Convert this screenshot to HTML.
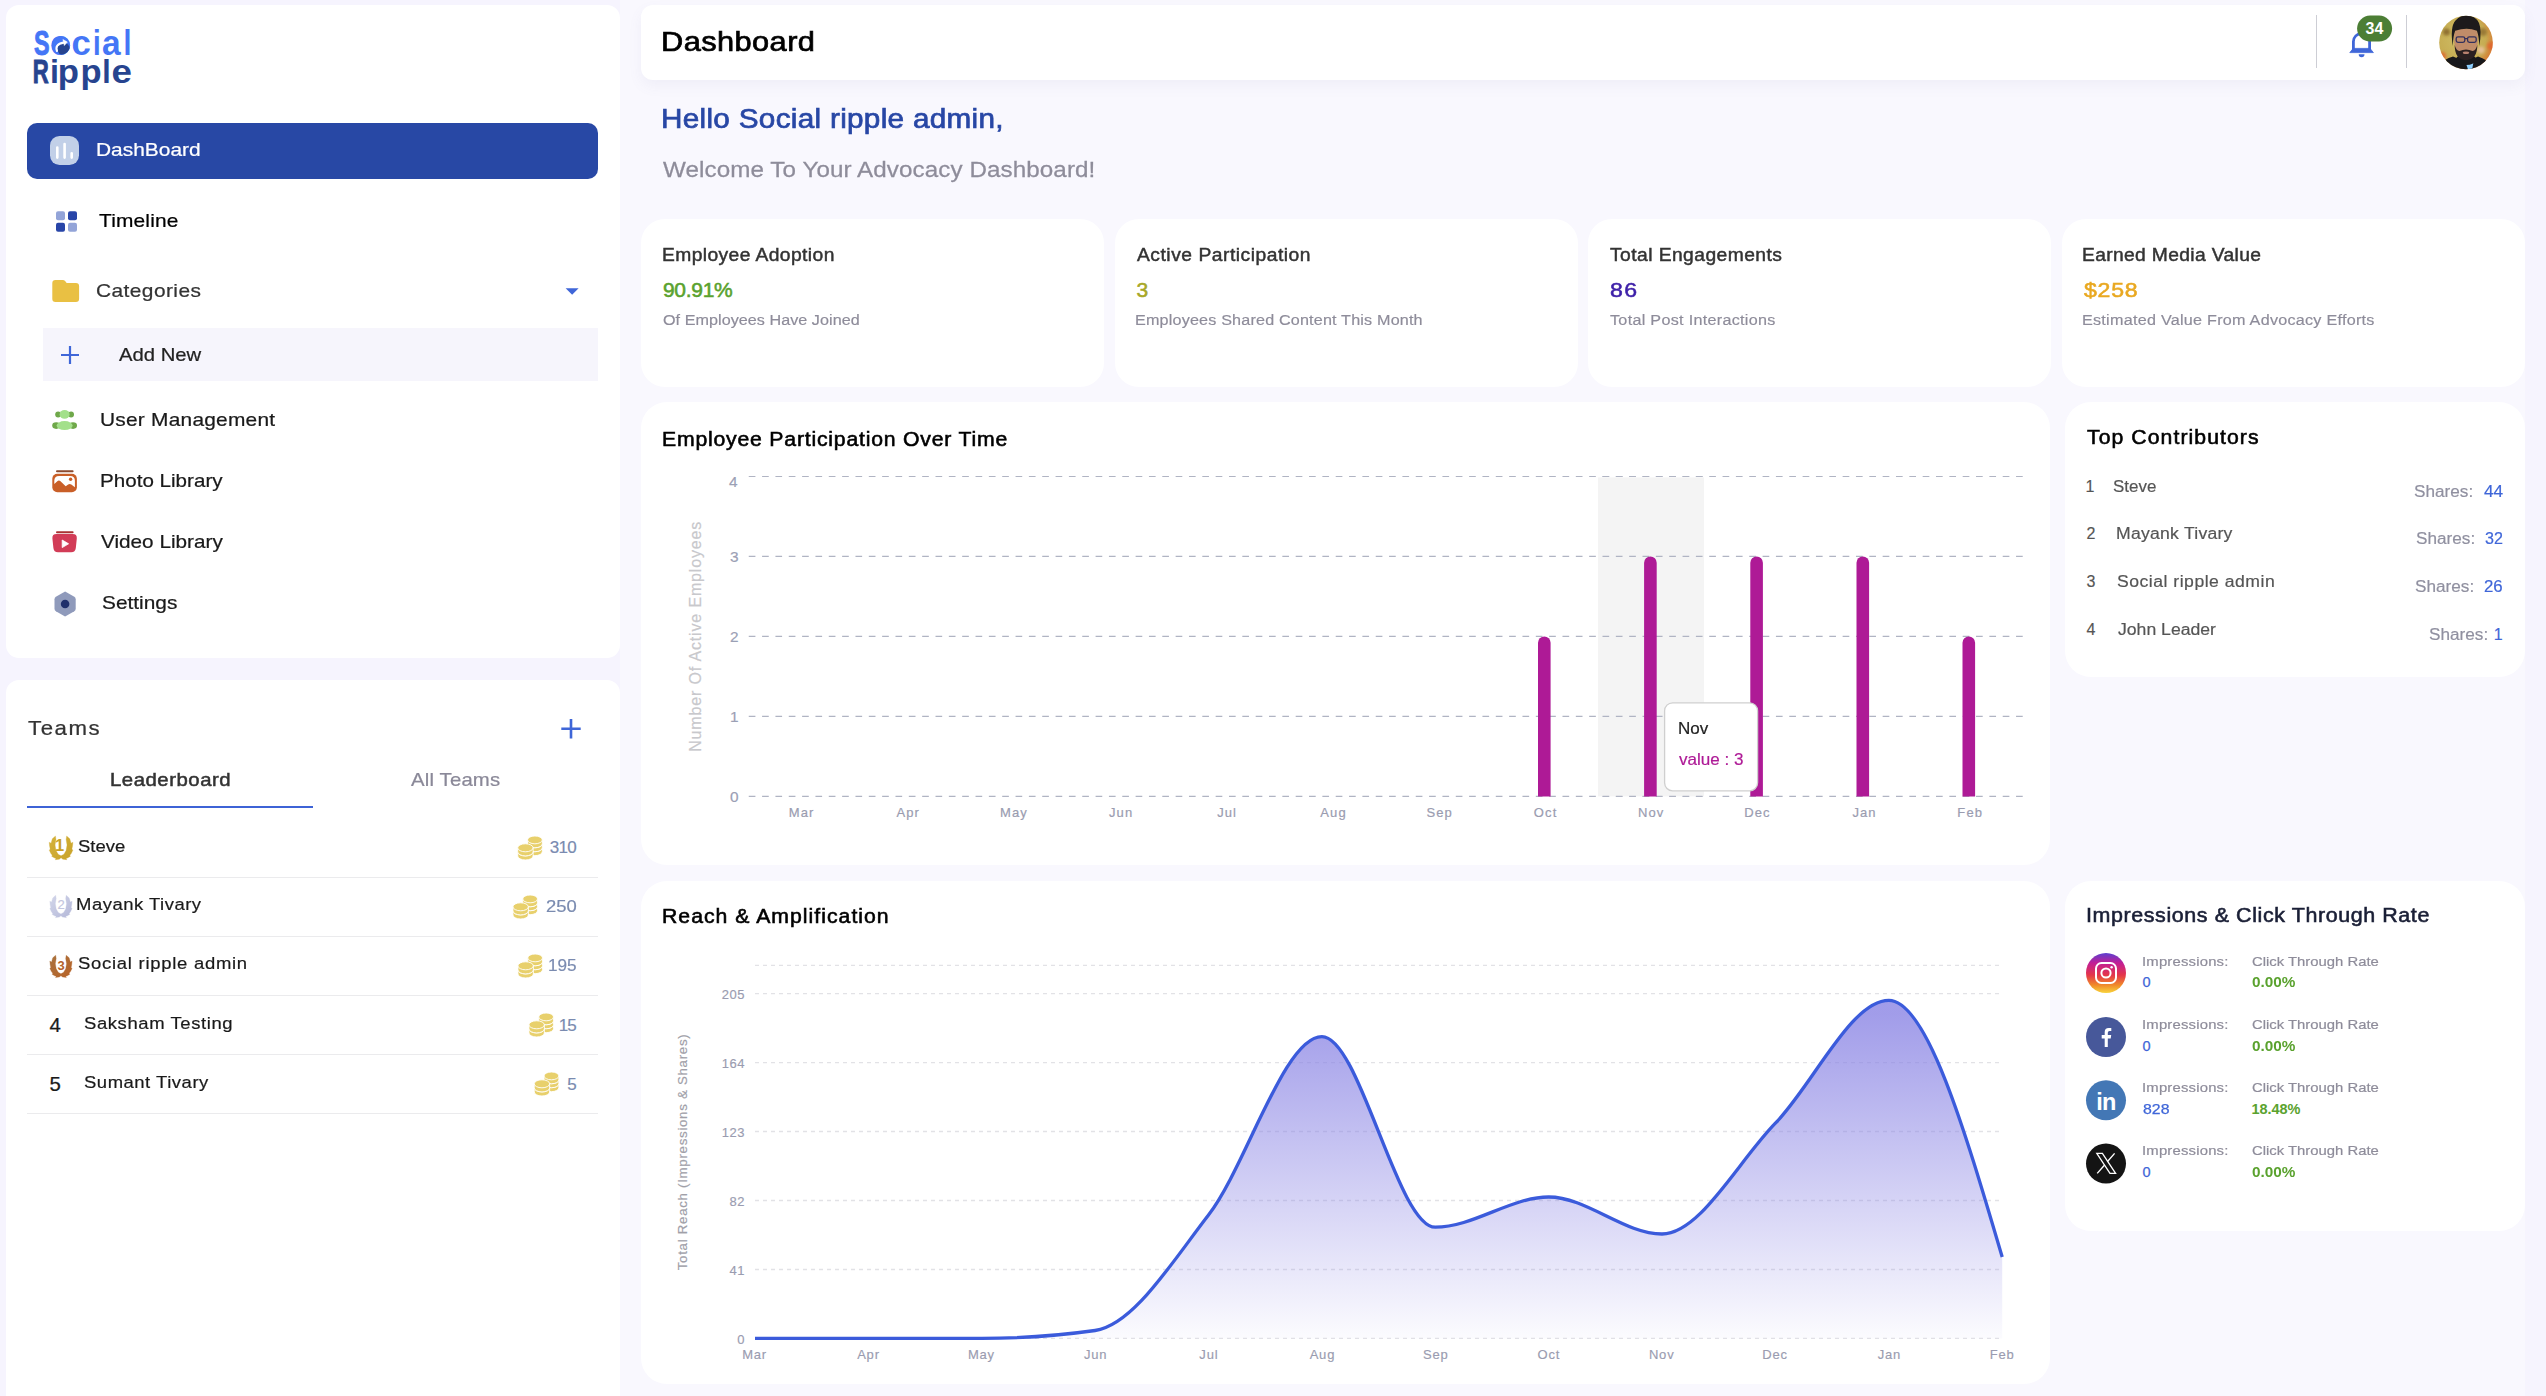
<!DOCTYPE html>
<html lang="en"><head><meta charset="utf-8"><title>Dashboard</title>
<style>
html,body{margin:0;padding:0;}
body{width:2546px;height:1396px;overflow:hidden;background:#f6f4fe;font-family:"Liberation Sans", sans-serif;position:relative;}
.t{position:absolute;white-space:pre;line-height:1;}
.b{position:absolute;}
.card{position:absolute;background:#fff;}
</style></head>
<body>

<div class="b" style="left:620px;top:0;width:1905px;height:1396px;background:#f9f8fe;"></div>
<div class="card" style="left:6px;top:5px;width:614px;height:653px;border-radius:13px;"></div>
<div class="card" style="left:6px;top:680px;width:614px;height:716px;border-radius:13px 13px 0 0;"></div>
<div class="b" style="left:27px;top:123px;width:571px;height:56px;border-radius:10px;background:#2848a5;"></div>
<div class="b" style="left:43px;top:328px;width:555px;height:53px;background:#f6f5fc;"></div>
<div class="b" style="left:27px;top:806px;width:286px;height:2px;background:#3d63d6;"></div>
<div class="card" style="left:641px;top:5px;width:1884px;height:74.5px;border-radius:12px;box-shadow:0 6px 14px rgba(120,120,170,0.07);"></div>
<div class="b" style="left:2316px;top:15px;width:1.3px;height:53px;background:#cdced5;"></div>
<div class="b" style="left:2406px;top:15px;width:1.3px;height:53px;background:#cdced5;"></div>
<div class="b" style="left:27px;top:877px;width:571px;height:1px;background:#ebebed;"></div>
<div class="b" style="left:27px;top:936px;width:571px;height:1px;background:#ebebed;"></div>
<div class="b" style="left:27px;top:995px;width:571px;height:1px;background:#ebebed;"></div>
<div class="b" style="left:27px;top:1054px;width:571px;height:1px;background:#ebebed;"></div>
<div class="b" style="left:27px;top:1113px;width:571px;height:1px;background:#ebebed;"></div>
<div class="card" style="left:641px;top:219px;width:463px;height:167.5px;border-radius:24px;"></div>
<div class="card" style="left:1115px;top:219px;width:463px;height:167.5px;border-radius:24px;"></div>
<div class="card" style="left:1588px;top:219px;width:463px;height:167.5px;border-radius:24px;"></div>
<div class="card" style="left:2062px;top:219px;width:463px;height:167.5px;border-radius:24px;"></div>

<div class="card" style="left:641px;top:402px;width:1409px;height:463px;border-radius:26px;"></div>
<div class="card" style="left:2065px;top:402px;width:460px;height:274.5px;border-radius:26px;"></div>
<div class="card" style="left:641px;top:880.5px;width:1409px;height:503px;border-radius:26px;"></div>
<div class="card" style="left:2065px;top:880.5px;width:460px;height:350.5px;border-radius:26px;"></div>

<svg class="b" style="left:0;top:0" width="2546" height="1396" viewBox="0 0 2546 1396">
<rect x="50" y="136" width="29" height="29" rx="9.5" fill="#c2d0e8"/>
<g stroke="#fff" stroke-width="2.6" stroke-linecap="round"><path d="M57.3 147.5V157.6M64.6 144V157.6M71.7 153.2V157.6"/></g>
<g><rect x="56" y="211.3" width="9" height="9" rx="2" fill="#93a4d8"/><rect x="68" y="211.3" width="9" height="9" rx="2" fill="#2845a8"/><rect x="56" y="222.8" width="9" height="9" rx="2" fill="#2845a8"/><rect x="68" y="222.8" width="9" height="9" rx="2" fill="#93a4d8"/></g>
<path d="M52.3 283.2 q0-3.2 3.2-3.2 h7.2 q1.6 0 2.6 1.2 l1.4 1.7 h9.2 q3.2 0 3.2 3.2 v12.6 q0 3.2-3.2 3.2 h-20.4 q-3.2 0-3.2-3.2 z" fill="#e9c043"/>
<path d="M565.6 288.2 h13 l-6.5 6.6 z" fill="#3f66d8"/>
<path d="M61 355 h18 M70 346 v18" stroke="#3f66d8" stroke-width="2.2" fill="none"/>
<path d="M561.3 728.8 h19.4 M571 719 v19.6" stroke="#3f66d8" stroke-width="2.6" fill="none"/>
<g><circle cx="58.1" cy="414.5" r="2.9" fill="#6fa84a"/><circle cx="71.1" cy="414.5" r="2.9" fill="#6fa84a"/><ellipse cx="64.6" cy="414.4" rx="5" ry="4.4" fill="#a3e08a"/><ellipse cx="56.2" cy="425.6" rx="4" ry="3.3" fill="#6fa84a"/><ellipse cx="73" cy="425.6" rx="4" ry="3.3" fill="#6fa84a"/><ellipse cx="64.6" cy="425.6" rx="8" ry="4.5" fill="#a3e08a"/></g>
<g><path d="M57 471.3 h15.6" stroke="#8b4a2f" stroke-width="2" stroke-linecap="round"/><rect x="52.3" y="473.8" width="24.6" height="18.5" rx="5" fill="#c95f28"/><path d="M54.3 480.8 q0-4.8 4.8-4.8 h11 q4.8 0 4.8 4.8 v6.4 l-3.6-2.6 q-1.6-1-3.2 0 l-2.4 1.6 l-5.2-5 q-1.6-1.4-3.2 0 l-3 2.8 z" fill="#fff"/><circle cx="70.6" cy="479.3" r="1.7" fill="#c95f28"/></g>
<g><path d="M57 532.2 h15.6" stroke="#a83232" stroke-width="2" stroke-linecap="round"/><path d="M56.6 534 h16 q4.6 0 4.2 4.4 l-1 9.6 q-0.4 4.2-4.6 4.2 h-13.2 q-4.2 0-4.6-4.2 l-1-9.6 q-0.4-4.4 4.2-4.4 z" fill="#d23c57"/><path d="M62.2 540 l6.4 3.8 l-6.4 3.8 z" fill="#fff" stroke="#fff" stroke-width="0.8" stroke-linejoin="round"/></g>
<g><path d="M65.1 591.6 l9.2 5.2 q1.4 0.8 1.4 2.4 v9.6 q0 1.6-1.4 2.4 l-9.2 5.2 l-9.2-5.2 q-1.4-0.8-1.4-2.4 v-9.6 q0-1.6 1.4-2.4 z" fill="#8f9abb"/><circle cx="65.1" cy="604" r="4.3" fill="#1f2f6b"/></g>
<defs><linearGradient id="lg1" x1="0" y1="0" x2="1" y2="1"><stop offset="0" stop-color="#d4b23c"/><stop offset="1" stop-color="#c9a227"/></linearGradient></defs><path d="M55.44 835.99 L52.32 838.75 L51.03 843.16 L49.19 842.24 L49.56 846.10 L50.19 849.04 L49.27 850.15 L50.85 853.46 L52.32 855.29 L51.58 856.21 L54.16 857.87 L55.99 858.42 L55.26 859.71 L59.30 859.16 L61.05 857.87 L62.80 859.16 L66.84 859.71 L66.11 858.42 L67.94 857.87 L70.52 856.21 L69.78 855.29 L71.25 853.46 L72.83 850.15 L71.91 849.04 L72.54 846.10 L72.91 842.24 L71.07 843.16 L69.78 838.75 L66.66 835.99 L66.11 839.49 L67.02 845.00 L66.11 850.52 L63.90 854.19 L61.05 855.85 L58.20 854.19 L55.99 850.52 L55.08 845.00 L55.99 839.49 Z" fill="url(#lg1)" stroke="url(#lg1)" stroke-width="0.3" stroke-linejoin="round"/>
<defs><linearGradient id="lg2" x1="0" y1="0" x2="1" y2="1"><stop offset="0" stop-color="#d3d6ea"/><stop offset="1" stop-color="#b4b8d8"/></linearGradient></defs><path d="M55.69 895.32 L52.76 897.91 L51.55 902.05 L49.82 901.19 L50.17 904.81 L50.75 907.57 L49.89 908.61 L51.38 911.71 L52.76 913.44 L52.07 914.30 L54.48 915.85 L56.21 916.37 L55.52 917.58 L59.31 917.06 L60.95 915.85 L62.59 917.06 L66.38 917.58 L65.69 916.37 L67.42 915.85 L69.83 914.30 L69.14 913.44 L70.52 911.71 L72.01 908.61 L71.15 907.57 L71.73 904.81 L72.08 901.19 L70.35 902.05 L69.14 897.91 L66.21 895.32 L65.69 898.60 L66.56 903.78 L65.69 908.95 L63.62 912.40 L60.95 913.95 L58.28 912.40 L56.21 908.95 L55.34 903.78 L56.21 898.60 Z" fill="url(#lg2)" stroke="url(#lg2)" stroke-width="0.3" stroke-linejoin="round"/>
<defs><linearGradient id="lg3" x1="0" y1="0" x2="1" y2="1"><stop offset="0" stop-color="#a9733f"/><stop offset="1" stop-color="#b86226"/></linearGradient></defs><path d="M55.69 955.22 L52.76 957.81 L51.55 961.95 L49.82 961.09 L50.17 964.71 L50.75 967.47 L49.89 968.51 L51.38 971.61 L52.76 973.34 L52.07 974.20 L54.48 975.75 L56.21 976.27 L55.52 977.48 L59.31 976.96 L60.95 975.75 L62.59 976.96 L66.38 977.48 L65.69 976.27 L67.42 975.75 L69.83 974.20 L69.14 973.34 L70.52 971.61 L72.01 968.51 L71.15 967.47 L71.73 964.71 L72.08 961.09 L70.35 961.95 L69.14 957.81 L66.21 955.22 L65.69 958.50 L66.56 963.68 L65.69 968.85 L63.62 972.30 L60.95 973.85 L58.28 972.30 L56.21 968.85 L55.34 963.68 L56.21 958.50 Z" fill="url(#lg3)" stroke="url(#lg3)" stroke-width="0.3" stroke-linejoin="round"/>
<g transform="translate(517.75 836)"><path d="M9.749999999999998 11.8 v3.95 a7.4 3.9 0 0 0 14.8 0 v-3.95 z" fill="#e8d06c" stroke="#fff" stroke-width="0.9"/><ellipse cx="17.15" cy="11.8" rx="7.4" ry="3.9" fill="#e8d06c" stroke="#fff" stroke-width="0.9"/><path d="M9.749999999999998 7.85 v3.95 a7.4 3.9 0 0 0 14.8 0 v-3.95 z" fill="#e8d06c" stroke="#fff" stroke-width="0.9"/><ellipse cx="17.15" cy="7.85" rx="7.4" ry="3.9" fill="#e8d06c" stroke="#fff" stroke-width="0.9"/><path d="M9.749999999999998 3.9 v3.95 a7.4 3.9 0 0 0 14.8 0 v-3.95 z" fill="#e8d06c" stroke="#fff" stroke-width="0.9"/><ellipse cx="17.15" cy="3.9" rx="7.4" ry="3.9" fill="#e8d06c" stroke="#fff" stroke-width="0.9"/><path d="M-0.04999999999999982 15.9 v4.1 a7.7 4.0 0 0 0 15.4 0 v-4.1 z" fill="#e8d06c" stroke="#fff" stroke-width="0.9"/><ellipse cx="7.65" cy="15.9" rx="7.7" ry="4.0" fill="#e8d06c" stroke="#fff" stroke-width="0.9"/><path d="M-0.04999999999999982 11.8 v4.1 a7.7 4.0 0 0 0 15.4 0 v-4.1 z" fill="#e8d06c" stroke="#fff" stroke-width="0.9"/><ellipse cx="7.65" cy="11.8" rx="7.7" ry="4.0" fill="#e8d06c" stroke="#fff" stroke-width="0.9"/></g>
<g transform="translate(513 895)"><path d="M9.749999999999998 11.8 v3.95 a7.4 3.9 0 0 0 14.8 0 v-3.95 z" fill="#e8d06c" stroke="#fff" stroke-width="0.9"/><ellipse cx="17.15" cy="11.8" rx="7.4" ry="3.9" fill="#e8d06c" stroke="#fff" stroke-width="0.9"/><path d="M9.749999999999998 7.85 v3.95 a7.4 3.9 0 0 0 14.8 0 v-3.95 z" fill="#e8d06c" stroke="#fff" stroke-width="0.9"/><ellipse cx="17.15" cy="7.85" rx="7.4" ry="3.9" fill="#e8d06c" stroke="#fff" stroke-width="0.9"/><path d="M9.749999999999998 3.9 v3.95 a7.4 3.9 0 0 0 14.8 0 v-3.95 z" fill="#e8d06c" stroke="#fff" stroke-width="0.9"/><ellipse cx="17.15" cy="3.9" rx="7.4" ry="3.9" fill="#e8d06c" stroke="#fff" stroke-width="0.9"/><path d="M-0.04999999999999982 15.9 v4.1 a7.7 4.0 0 0 0 15.4 0 v-4.1 z" fill="#e8d06c" stroke="#fff" stroke-width="0.9"/><ellipse cx="7.65" cy="15.9" rx="7.7" ry="4.0" fill="#e8d06c" stroke="#fff" stroke-width="0.9"/><path d="M-0.04999999999999982 11.8 v4.1 a7.7 4.0 0 0 0 15.4 0 v-4.1 z" fill="#e8d06c" stroke="#fff" stroke-width="0.9"/><ellipse cx="7.65" cy="11.8" rx="7.7" ry="4.0" fill="#e8d06c" stroke="#fff" stroke-width="0.9"/></g>
<g transform="translate(518 954)"><path d="M9.749999999999998 11.8 v3.95 a7.4 3.9 0 0 0 14.8 0 v-3.95 z" fill="#e8d06c" stroke="#fff" stroke-width="0.9"/><ellipse cx="17.15" cy="11.8" rx="7.4" ry="3.9" fill="#e8d06c" stroke="#fff" stroke-width="0.9"/><path d="M9.749999999999998 7.85 v3.95 a7.4 3.9 0 0 0 14.8 0 v-3.95 z" fill="#e8d06c" stroke="#fff" stroke-width="0.9"/><ellipse cx="17.15" cy="7.85" rx="7.4" ry="3.9" fill="#e8d06c" stroke="#fff" stroke-width="0.9"/><path d="M9.749999999999998 3.9 v3.95 a7.4 3.9 0 0 0 14.8 0 v-3.95 z" fill="#e8d06c" stroke="#fff" stroke-width="0.9"/><ellipse cx="17.15" cy="3.9" rx="7.4" ry="3.9" fill="#e8d06c" stroke="#fff" stroke-width="0.9"/><path d="M-0.04999999999999982 15.9 v4.1 a7.7 4.0 0 0 0 15.4 0 v-4.1 z" fill="#e8d06c" stroke="#fff" stroke-width="0.9"/><ellipse cx="7.65" cy="15.9" rx="7.7" ry="4.0" fill="#e8d06c" stroke="#fff" stroke-width="0.9"/><path d="M-0.04999999999999982 11.8 v4.1 a7.7 4.0 0 0 0 15.4 0 v-4.1 z" fill="#e8d06c" stroke="#fff" stroke-width="0.9"/><ellipse cx="7.65" cy="11.8" rx="7.7" ry="4.0" fill="#e8d06c" stroke="#fff" stroke-width="0.9"/></g>
<g transform="translate(529 1013)"><path d="M9.749999999999998 11.8 v3.95 a7.4 3.9 0 0 0 14.8 0 v-3.95 z" fill="#e8d06c" stroke="#fff" stroke-width="0.9"/><ellipse cx="17.15" cy="11.8" rx="7.4" ry="3.9" fill="#e8d06c" stroke="#fff" stroke-width="0.9"/><path d="M9.749999999999998 7.85 v3.95 a7.4 3.9 0 0 0 14.8 0 v-3.95 z" fill="#e8d06c" stroke="#fff" stroke-width="0.9"/><ellipse cx="17.15" cy="7.85" rx="7.4" ry="3.9" fill="#e8d06c" stroke="#fff" stroke-width="0.9"/><path d="M9.749999999999998 3.9 v3.95 a7.4 3.9 0 0 0 14.8 0 v-3.95 z" fill="#e8d06c" stroke="#fff" stroke-width="0.9"/><ellipse cx="17.15" cy="3.9" rx="7.4" ry="3.9" fill="#e8d06c" stroke="#fff" stroke-width="0.9"/><path d="M-0.04999999999999982 15.9 v4.1 a7.7 4.0 0 0 0 15.4 0 v-4.1 z" fill="#e8d06c" stroke="#fff" stroke-width="0.9"/><ellipse cx="7.65" cy="15.9" rx="7.7" ry="4.0" fill="#e8d06c" stroke="#fff" stroke-width="0.9"/><path d="M-0.04999999999999982 11.8 v4.1 a7.7 4.0 0 0 0 15.4 0 v-4.1 z" fill="#e8d06c" stroke="#fff" stroke-width="0.9"/><ellipse cx="7.65" cy="11.8" rx="7.7" ry="4.0" fill="#e8d06c" stroke="#fff" stroke-width="0.9"/></g>
<g transform="translate(534.3 1072)"><path d="M9.749999999999998 11.8 v3.95 a7.4 3.9 0 0 0 14.8 0 v-3.95 z" fill="#e8d06c" stroke="#fff" stroke-width="0.9"/><ellipse cx="17.15" cy="11.8" rx="7.4" ry="3.9" fill="#e8d06c" stroke="#fff" stroke-width="0.9"/><path d="M9.749999999999998 7.85 v3.95 a7.4 3.9 0 0 0 14.8 0 v-3.95 z" fill="#e8d06c" stroke="#fff" stroke-width="0.9"/><ellipse cx="17.15" cy="7.85" rx="7.4" ry="3.9" fill="#e8d06c" stroke="#fff" stroke-width="0.9"/><path d="M9.749999999999998 3.9 v3.95 a7.4 3.9 0 0 0 14.8 0 v-3.95 z" fill="#e8d06c" stroke="#fff" stroke-width="0.9"/><ellipse cx="17.15" cy="3.9" rx="7.4" ry="3.9" fill="#e8d06c" stroke="#fff" stroke-width="0.9"/><path d="M-0.04999999999999982 15.9 v4.1 a7.7 4.0 0 0 0 15.4 0 v-4.1 z" fill="#e8d06c" stroke="#fff" stroke-width="0.9"/><ellipse cx="7.65" cy="15.9" rx="7.7" ry="4.0" fill="#e8d06c" stroke="#fff" stroke-width="0.9"/><path d="M-0.04999999999999982 11.8 v4.1 a7.7 4.0 0 0 0 15.4 0 v-4.1 z" fill="#e8d06c" stroke="#fff" stroke-width="0.9"/><ellipse cx="7.65" cy="11.8" rx="7.7" ry="4.0" fill="#e8d06c" stroke="#fff" stroke-width="0.9"/></g>
<g fill="none" stroke="#3f66d8" stroke-width="2.8" stroke-linejoin="round"><path d="M2353.4 50.6 V41.6 a8.1 8.1 0 0 1 16.2 0 V50.6"/></g>
<path d="M2349.8 52.6 l3.4-4.2 h16.8 l3.4 4.2 z" fill="#3f66d8" stroke="#3f66d8" stroke-width="0.8" stroke-linejoin="round"/>
<path d="M2358.7 54.3 h5.8 a2.9 2.9 0 0 1 -5.8 0 z" fill="#3f66d8"/>
<rect x="2357.1" y="15.6" width="35" height="26" rx="13" fill="#4c7e35"/>
<defs><clipPath id="av"><circle cx="2466" cy="42.5" r="26.8"/></clipPath>
<radialGradient id="avbg" cx="0.42" cy="0.42" r="0.7"><stop offset="0" stop-color="#cfbe66"/><stop offset="0.62" stop-color="#c6ac52"/><stop offset="0.86" stop-color="#d9772f"/><stop offset="1" stop-color="#e2532a"/></radialGradient>
<filter id="bl" x="-50%" y="-50%" width="200%" height="200%"><feGaussianBlur stdDeviation="1.6"/></filter></defs>
<g clip-path="url(#av)">
<rect x="2438" y="15" width="56" height="56" fill="url(#avbg)"/>
<g filter="url(#bl)"><circle cx="2446.5" cy="32" r="3.6" fill="#7a5a22" opacity="0.75"/><circle cx="2483" cy="32" r="4" fill="#86642a" opacity="0.7"/><circle cx="2481" cy="50" r="3.6" fill="#f0c4a8" opacity="0.8"/><circle cx="2442" cy="56" r="4" fill="#e2602a" opacity="0.8"/><circle cx="2491" cy="46" r="4" fill="#e2602a" opacity="0.8"/></g>
<path d="M2434 76 q3-15 19-19.5 l13 5.5 l12-5.5 q14 4 20 19.500 z" fill="#18181b"/>
<path d="M2468.4 60.6 l-2.6 2.4 l2.900 8.500 h3 l1.600-8.500 l-2.100-2.400 z" fill="#8fd0ff"/>
<ellipse cx="2466" cy="59.5" rx="10" ry="5.5" fill="#18181b"/><ellipse cx="2466" cy="43.800" rx="11.4" ry="15" fill="#c08c69"/><rect x="2454.200" y="29" width="23.600" height="17" rx="5" fill="#c08c69"/>
<path d="M2454.7 45 Q2454.6 59.700 2466 60.200 Q2477.400 59.700 2477.300 45 Q2476 50.500 2472.500 51 Q2466 47.800 2459.500 51 Q2456 50.500 2454.700 45 Z" fill="#2a2021"/>
<ellipse cx="2466" cy="52.8" rx="3.2" ry="1.2" fill="#b98270"/>
<path d="M2452.800 46 Q2449.800 27 2455.500 20.500 Q2460.500 15 2467 15.300 Q2475.500 15.800 2479 23 Q2482 30 2479.300 46 Q2478.900 36 2476.900 30.800 Q2467 26.800 2455.200 30.800 Q2453.200 36 2452.800 46 Z" fill="#1d1a1b"/>
<g fill="none" stroke="#33315c" stroke-width="1.3"><rect x="2456.200" y="36.800" width="8.600" height="5.600" rx="1.800"/><rect x="2467.600" y="36.800" width="8.600" height="5.600" rx="1.800"/><path d="M2464.800 38.600 h2.800"/></g>
</g>
<path d="M748.75 476.5 H2023.2" stroke="#b0b4c3" stroke-width="1.15" stroke-dasharray="6.67 6.67" fill="none"/>
<path d="M748.75 556.4 H2023.2" stroke="#b0b4c3" stroke-width="1.15" stroke-dasharray="6.67 6.67" fill="none"/>
<path d="M748.75 636.4 H2023.2" stroke="#b0b4c3" stroke-width="1.15" stroke-dasharray="6.67 6.67" fill="none"/>
<path d="M748.75 716.4 H2023.2" stroke="#b0b4c3" stroke-width="1.15" stroke-dasharray="6.67 6.67" fill="none"/>
<path d="M748.75 796.4 H2023.2" stroke="#b0b4c3" stroke-width="1.15" stroke-dasharray="6.67 6.67" fill="none"/>
<rect x="1598" y="477.4" width="106" height="319" fill="#f4f4f4"/>
<path d="M1598 476.5 H1704" stroke="#b0b4c3" stroke-width="1.15" stroke-dasharray="6.67 6.67" stroke-dashoffset="8.83" fill="none"/>
<path d="M1598 556.4 H1704" stroke="#b0b4c3" stroke-width="1.15" stroke-dasharray="6.67 6.67" stroke-dashoffset="8.83" fill="none"/>
<path d="M1598 636.4 H1704" stroke="#b0b4c3" stroke-width="1.15" stroke-dasharray="6.67 6.67" stroke-dashoffset="8.83" fill="none"/>
<path d="M1598 716.4 H1704" stroke="#b0b4c3" stroke-width="1.15" stroke-dasharray="6.67 6.67" stroke-dashoffset="8.83" fill="none"/>
<path d="M1598 796.4 H1704" stroke="#b0b4c3" stroke-width="1.15" stroke-dasharray="6.67 6.67" stroke-dashoffset="8.83" fill="none"/>
<path d="M1538.00 796.4 V642.70 a6.3 6.3 0 0 1 12.6 0 V796.4 z" fill="#ae1a96"/>
<path d="M1644.10 796.4 V562.70 a6.3 6.3 0 0 1 12.6 0 V796.4 z" fill="#ae1a96"/>
<path d="M1750.30 796.4 V562.70 a6.3 6.3 0 0 1 12.6 0 V796.4 z" fill="#ae1a96"/>
<path d="M1856.50 796.4 V562.70 a6.3 6.3 0 0 1 12.6 0 V796.4 z" fill="#ae1a96"/>
<path d="M1962.50 796.4 V642.70 a6.3 6.3 0 0 1 12.6 0 V796.4 z" fill="#ae1a96"/>
<rect x="1664.6" y="702.8" width="93" height="88" rx="8" fill="#fff" stroke="#cfcfcf" stroke-width="1.3"/>
<path d="M755 965.3 H1999.6" stroke="#e2e2e6" stroke-width="1.3" stroke-dasharray="4 4" fill="none"/>
<path d="M755 993.6 H1999.6" stroke="#e2e2e6" stroke-width="1.3" stroke-dasharray="4 4" fill="none"/>
<path d="M755 1062.6 H1999.6" stroke="#e2e2e6" stroke-width="1.3" stroke-dasharray="4 4" fill="none"/>
<path d="M755 1131.5 H1999.6" stroke="#e2e2e6" stroke-width="1.3" stroke-dasharray="4 4" fill="none"/>
<path d="M755 1200.5 H1999.6" stroke="#e2e2e6" stroke-width="1.3" stroke-dasharray="4 4" fill="none"/>
<path d="M755 1269.5 H1999.6" stroke="#e2e2e6" stroke-width="1.3" stroke-dasharray="4 4" fill="none"/>
<path d="M755 1338.4 H1999.6" stroke="#e2e2e6" stroke-width="1.3" stroke-dasharray="4 4" fill="none"/>
<defs><linearGradient id="ag" x1="0" y1="0" x2="0" y2="1"><stop offset="0.04" stop-color="#8a84e4" stop-opacity="0.8"/><stop offset="1" stop-color="#8a84e4" stop-opacity="0.03"/></linearGradient></defs>
<path d="M755.0 1338.4 C792.8 1338.4 830.6 1338.4 868.4 1338.4 C906.2 1338.4 944.0 1338.4 981.8 1338.4 C1019.6 1338.4 1057.3 1335.8 1095.1 1330.5 C1132.9 1325.2 1170.7 1264.0 1208.5 1215.0 C1246.3 1166.0 1284.1 1036.6 1321.9 1036.6 C1359.7 1036.6 1397.5 1227.2 1435.3 1227.2 C1473.1 1227.2 1510.9 1197.0 1548.7 1197.0 C1586.5 1197.0 1624.2 1234.0 1662.0 1234.0 C1699.8 1234.0 1737.6 1162.1 1775.4 1123.2 C1813.2 1084.3 1851.0 1000.4 1888.8 1000.4 C1926.6 1000.4 1964.4 1128.7 2002.2 1257.0 L2002.2 1338.4 L755.0 1338.4 z" fill="url(#ag)"/>
<path d="M755.0 1338.4 C792.8 1338.4 830.6 1338.4 868.4 1338.4 C906.2 1338.4 944.0 1338.4 981.8 1338.4 C1019.6 1338.4 1057.3 1335.8 1095.1 1330.5 C1132.9 1325.2 1170.7 1264.0 1208.5 1215.0 C1246.3 1166.0 1284.1 1036.6 1321.9 1036.6 C1359.7 1036.6 1397.5 1227.2 1435.3 1227.2 C1473.1 1227.2 1510.9 1197.0 1548.7 1197.0 C1586.5 1197.0 1624.2 1234.0 1662.0 1234.0 C1699.8 1234.0 1737.6 1162.1 1775.4 1123.2 C1813.2 1084.3 1851.0 1000.4 1888.8 1000.4 C1926.6 1000.4 1964.4 1128.7 2002.2 1257.0" fill="none" stroke="#3b5bdb" stroke-width="3.3" stroke-linejoin="round"/>
<defs><linearGradient id="ig" x1="0" y1="0" x2="0" y2="1"><stop offset="0" stop-color="#5b3fd0"/><stop offset="0.25" stop-color="#c21f96"/><stop offset="0.55" stop-color="#e4354a"/><stop offset="0.8" stop-color="#f08a2a"/><stop offset="1" stop-color="#f8d43c"/></linearGradient></defs>
<circle cx="2106" cy="973" r="20" fill="url(#ig)"/>
<g fill="none" stroke="#fff" stroke-width="2"><rect x="2096" y="963" width="20" height="20" rx="5.5"/><circle cx="2106" cy="973" r="4.6"/></g><circle cx="2111.600" cy="967.3" r="1.2" fill="#fff"/>
<circle cx="2106" cy="1037" r="20" fill="#47589a"/>
<path d="M2107.800 1047 v-8.6 h2.900 l0.500-3.500 h-3.400 v-2.200 q0-1.600 1.700-1.600 h1.800 v-3 q-1.200-0.200-2.600-0.200 q-4 0-4 4.200 v2.800 h-3 v3.500 h3 v8.600 z" fill="#fff"/>
<circle cx="2106" cy="1100.300" r="20" fill="#4377b5"/>
<circle cx="2106" cy="1163.600" r="20" fill="#141414"/>
<path d="M2096.800 1153.400 h5.600 l13.200 20 h-5.600 z" fill="none" stroke="#fff" stroke-width="1.3"/><path d="M2114.600 1153.400 l-7.300 8.400 M2104.600 1165 l-7.400 8.400" stroke="#fff" stroke-width="1.400" fill="none"/>
<text x="2096.2" y="1110.3" font-family="Liberation Sans, sans-serif" font-weight="700" font-size="23.5" letter-spacing="-0.8" fill="#fff">in</text>
</svg>
<span class="t" style="left:96.40px;top:140.17px;font-size:19px;color:#fff;letter-spacing:0.018px;-webkit-text-stroke:0.23px #fff;transform-origin:0 50%;transform:scaleX(1.1000);">DashBoard</span>
<span class="t" style="left:98.50px;top:211.17px;font-size:19px;color:#000;letter-spacing:0.152px;-webkit-text-stroke:0.23px #000;transform-origin:0 50%;transform:scaleX(1.1000);">Timeline</span>
<span class="t" style="left:95.60px;top:281.17px;font-size:19px;color:#333;letter-spacing:0.392px;-webkit-text-stroke:0.23px #333;transform-origin:0 50%;transform:scaleX(1.1000);">Categories</span>
<span class="t" style="left:118.75px;top:344.92px;font-size:19px;color:#222;-webkit-text-stroke:0.23px #222;transform-origin:0 50%;transform:scaleX(1.0663);">Add New</span>
<span class="t" style="left:100.40px;top:410.32px;font-size:19px;color:#1a1a1a;letter-spacing:0.203px;-webkit-text-stroke:0.23px #1a1a1a;transform-origin:0 50%;transform:scaleX(1.1000);">User Management</span>
<span class="t" style="left:100.42px;top:470.92px;font-size:19px;color:#1a1a1a;-webkit-text-stroke:0.23px #1a1a1a;transform-origin:0 50%;transform:scaleX(1.0844);">Photo Library</span>
<span class="t" style="left:101.20px;top:532.02px;font-size:19px;color:#1a1a1a;-webkit-text-stroke:0.23px #1a1a1a;transform-origin:0 50%;transform:scaleX(1.0909);">Video Library</span>
<span class="t" style="left:101.50px;top:592.92px;font-size:19px;color:#1a1a1a;-webkit-text-stroke:0.23px #1a1a1a;transform-origin:0 50%;transform:scaleX(1.0968);">Settings</span>
<span class="t" style="left:28.00px;top:717.90px;font-size:20.2px;color:#333;letter-spacing:1.409px;-webkit-text-stroke:0.24px #333;transform-origin:0 50%;transform:scaleX(1.1000);">Teams</span>
<span class="t" style="left:109.50px;top:771.24px;font-size:18.5px;color:#333;letter-spacing:0.473px;-webkit-text-stroke:0.5px #333;transform-origin:0 50%;transform:scaleX(1.1000);">Leaderboard</span>
<span class="t" style="left:411.00px;top:771.24px;font-size:18.5px;color:#8a8898;letter-spacing:0.150px;-webkit-text-stroke:0.22px #8a8898;transform-origin:0 50%;transform:scaleX(1.1000);">All Teams</span>
<span class="t" style="left:77.50px;top:838.53px;font-size:16.8px;color:#1a1a1a;letter-spacing:0.037px;-webkit-text-stroke:0.2px #1a1a1a;transform-origin:0 50%;transform:scaleX(1.1000);">Steve</span>
<span class="t" style="left:76.40px;top:897.38px;font-size:16.8px;color:#1a1a1a;letter-spacing:0.462px;-webkit-text-stroke:0.2px #1a1a1a;transform-origin:0 50%;transform:scaleX(1.1000);">Mayank Tivary</span>
<span class="t" style="left:77.50px;top:956.38px;font-size:16.8px;color:#1a1a1a;letter-spacing:0.665px;-webkit-text-stroke:0.2px #1a1a1a;transform-origin:0 50%;transform:scaleX(1.1000);">Social ripple admin</span>
<span class="t" style="left:84.00px;top:1015.98px;font-size:16.8px;color:#1a1a1a;letter-spacing:0.539px;-webkit-text-stroke:0.2px #1a1a1a;transform-origin:0 50%;transform:scaleX(1.1000);">Saksham Testing</span>
<span class="t" style="left:84.00px;top:1074.98px;font-size:16.8px;color:#1a1a1a;letter-spacing:0.479px;-webkit-text-stroke:0.2px #1a1a1a;transform-origin:0 50%;transform:scaleX(1.1000);">Sumant Tivary</span>
<span class="t" style="left:49.40px;top:1014.63px;font-size:20.4px;color:#1a1a1a;-webkit-text-stroke:0.24px #1a1a1a;">4</span>
<span class="t" style="left:49.40px;top:1073.63px;font-size:20.4px;color:#1a1a1a;-webkit-text-stroke:0.24px #1a1a1a;">5</span>
<span class="t" style="left:549.75px;top:839.36px;font-size:17px;color:#7a8bb0;letter-spacing:-0.705px;-webkit-text-stroke:0.2px #7a8bb0;">310</span>
<span class="t" style="left:546.00px;top:898.36px;font-size:17px;color:#7a8bb0;-webkit-text-stroke:0.2px #7a8bb0;transform-origin:0 50%;transform:scaleX(1.0839);">250</span>
<span class="t" style="left:548.04px;top:957.36px;font-size:17px;color:#7a8bb0;-webkit-text-stroke:0.2px #7a8bb0;transform-origin:0 50%;transform:scaleX(1.0108);">195</span>
<span class="t" style="left:558.65px;top:1016.61px;font-size:17px;color:#7a8bb0;letter-spacing:-0.855px;-webkit-text-stroke:0.2px #7a8bb0;">15</span>
<span class="t" style="left:567.25px;top:1075.61px;font-size:17px;color:#7a8bb0;-webkit-text-stroke:0.2px #7a8bb0;">5</span>
<span class="t" style="left:55.10px;top:836.83px;font-size:16.5px;font-weight:700;color:#c9a227;">1</span>
<span class="t" style="left:57.45px;top:898.30px;font-size:13px;color:#c3c6e0;-webkit-text-stroke:0.16px #c3c6e0;">2</span>
<span class="t" style="left:57.60px;top:958.80px;font-size:13px;font-weight:700;color:#b5622a;">3</span>
<span class="t" style="left:660.80px;top:27.70px;font-size:28px;color:#000;letter-spacing:0.370px;-webkit-text-stroke:0.7px #000;transform-origin:0 50%;transform:scaleX(1.1000);">Dashboard</span>
<span class="t" style="left:660.80px;top:105.54px;font-size:27px;color:#2847a5;letter-spacing:0.272px;-webkit-text-stroke:0.7px #2847a5;transform-origin:0 50%;transform:scaleX(1.1000);">Hello Social ripple admin,</span>
<span class="t" style="left:663.00px;top:158.88px;font-size:22px;color:#8e8c9a;letter-spacing:0.072px;-webkit-text-stroke:0.26px #8e8c9a;transform-origin:0 50%;transform:scaleX(1.1000);">Welcome To Your Advocacy Dashboard!</span>
<span class="t" style="left:2365.55px;top:21.36px;font-size:16px;font-weight:700;color:#fff;">34</span>
<span class="t" style="left:661.90px;top:247.09px;font-size:17.5px;color:#333;letter-spacing:0.367px;-webkit-text-stroke:0.45px #333;transform-origin:0 50%;transform:scaleX(1.1000);">Employee Adoption</span>
<span class="t" style="left:663.00px;top:278.62px;font-size:21px;color:#5aa22e;letter-spacing:-0.310px;-webkit-text-stroke:0.55px #5aa22e;">90.91%</span>
<span class="t" style="left:663.00px;top:312.56px;font-size:14.7px;color:#8e8c9a;letter-spacing:0.036px;-webkit-text-stroke:0.18px #8e8c9a;transform-origin:0 50%;transform:scaleX(1.1000);">Of Employees Have Joined</span>
<span class="t" style="left:1136.50px;top:247.09px;font-size:17.5px;color:#333;letter-spacing:0.469px;-webkit-text-stroke:0.45px #333;transform-origin:0 50%;transform:scaleX(1.1000);">Active Participation</span>
<span class="t" style="left:1136.50px;top:278.62px;font-size:21px;color:#a8a828;-webkit-text-stroke:0.55px #a8a828;">3</span>
<span class="t" style="left:1135.40px;top:312.56px;font-size:14.7px;color:#8e8c9a;letter-spacing:0.158px;-webkit-text-stroke:0.18px #8e8c9a;transform-origin:0 50%;transform:scaleX(1.1000);">Employees Shared Content This Month</span>
<span class="t" style="left:1609.50px;top:247.09px;font-size:17.5px;color:#333;letter-spacing:0.405px;-webkit-text-stroke:0.45px #333;transform-origin:0 50%;transform:scaleX(1.1000);">Total Engagements</span>
<span class="t" style="left:1609.50px;top:278.62px;font-size:21px;color:#3d1fa8;letter-spacing:1.321px;-webkit-text-stroke:0.55px #3d1fa8;transform-origin:0 50%;transform:scaleX(1.1000);">86</span>
<span class="t" style="left:1609.50px;top:312.56px;font-size:14.7px;color:#8e8c9a;letter-spacing:0.266px;-webkit-text-stroke:0.18px #8e8c9a;transform-origin:0 50%;transform:scaleX(1.1000);">Total Post Interactions</span>
<span class="t" style="left:2082.40px;top:247.09px;font-size:17.5px;color:#333;letter-spacing:0.316px;-webkit-text-stroke:0.45px #333;transform-origin:0 50%;transform:scaleX(1.1000);">Earned Media Value</span>
<span class="t" style="left:2083.50px;top:278.62px;font-size:21px;color:#e9a820;letter-spacing:0.654px;-webkit-text-stroke:0.55px #e9a820;transform-origin:0 50%;transform:scaleX(1.1000);">$258</span>
<span class="t" style="left:2082.40px;top:312.56px;font-size:14.7px;color:#8e8c9a;letter-spacing:0.233px;-webkit-text-stroke:0.18px #8e8c9a;transform-origin:0 50%;transform:scaleX(1.1000);">Estimated Value From Advocacy Efforts</span>
<span class="t" style="left:661.90px;top:429.91px;font-size:19.3px;color:#000;letter-spacing:0.722px;-webkit-text-stroke:0.55px #000;transform-origin:0 50%;transform:scaleX(1.1000);">Employee Participation Over Time</span>
<span class="t" style="left:729.00px;top:474.01px;font-size:15.4px;color:#9ba0b5;-webkit-text-stroke:0.18px #9ba0b5;">4</span>
<span class="t" style="left:730.00px;top:548.76px;font-size:15.4px;color:#9ba0b5;-webkit-text-stroke:0.18px #9ba0b5;">3</span>
<span class="t" style="left:730.00px;top:629.01px;font-size:15.4px;color:#9ba0b5;-webkit-text-stroke:0.18px #9ba0b5;">2</span>
<span class="t" style="left:730.00px;top:709.01px;font-size:15.4px;color:#9ba0b5;-webkit-text-stroke:0.18px #9ba0b5;">1</span>
<span class="t" style="left:730.00px;top:789.01px;font-size:15.4px;color:#9ba0b5;-webkit-text-stroke:0.18px #9ba0b5;">0</span>
<span class="t" style="left:788.72px;top:805.80px;font-size:13px;color:#9a9cb0;letter-spacing:1.100px;-webkit-text-stroke:0.2px #9a9cb0;">Mar</span>
<span class="t" style="left:896.50px;top:805.80px;font-size:13px;color:#9a9cb0;letter-spacing:1.100px;-webkit-text-stroke:0.2px #9a9cb0;">Apr</span>
<span class="t" style="left:1000.12px;top:805.80px;font-size:13px;color:#9a9cb0;letter-spacing:1.100px;-webkit-text-stroke:0.2px #9a9cb0;">May</span>
<span class="t" style="left:1108.99px;top:805.80px;font-size:13px;color:#9a9cb0;letter-spacing:1.100px;-webkit-text-stroke:0.2px #9a9cb0;">Jun</span>
<span class="t" style="left:1217.19px;top:805.80px;font-size:13px;color:#9a9cb0;letter-spacing:1.100px;-webkit-text-stroke:0.2px #9a9cb0;">Jul</span>
<span class="t" style="left:1320.30px;top:805.80px;font-size:13px;color:#9a9cb0;letter-spacing:1.100px;-webkit-text-stroke:0.2px #9a9cb0;">Aug</span>
<span class="t" style="left:1426.50px;top:805.80px;font-size:13px;color:#9a9cb0;letter-spacing:1.100px;-webkit-text-stroke:0.2px #9a9cb0;">Sep</span>
<span class="t" style="left:1533.84px;top:805.80px;font-size:13px;color:#9a9cb0;letter-spacing:1.100px;-webkit-text-stroke:0.2px #9a9cb0;">Oct</span>
<span class="t" style="left:1638.04px;top:805.80px;font-size:13px;color:#9a9cb0;letter-spacing:1.100px;-webkit-text-stroke:0.2px #9a9cb0;">Nov</span>
<span class="t" style="left:1744.24px;top:805.80px;font-size:13px;color:#9a9cb0;letter-spacing:1.100px;-webkit-text-stroke:0.2px #9a9cb0;">Dec</span>
<span class="t" style="left:1852.39px;top:805.80px;font-size:13px;color:#9a9cb0;letter-spacing:1.100px;-webkit-text-stroke:0.2px #9a9cb0;">Jan</span>
<span class="t" style="left:1957.36px;top:805.80px;font-size:13px;color:#9a9cb0;letter-spacing:1.100px;-webkit-text-stroke:0.2px #9a9cb0;">Feb</span>
<span class="t" style="left:1677.67px;top:720.23px;font-size:16.5px;color:#222;-webkit-text-stroke:0.2px #222;transform-origin:0 50%;transform:scaleX(1.0312);">Nov</span>
<span class="t" style="left:1678.70px;top:751.23px;font-size:16.5px;color:#ae1a96;-webkit-text-stroke:0.2px #ae1a96;transform-origin:0 50%;transform:scaleX(1.0338);">value : 3</span>
<span class="t" style="left:2087.00px;top:428.46px;font-size:19.3px;color:#000;letter-spacing:0.969px;-webkit-text-stroke:0.55px #000;transform-origin:0 50%;transform:scaleX(1.1000);">Top Contributors</span>
<span class="t" style="left:2085.50px;top:479.36px;font-size:16px;color:#555;-webkit-text-stroke:0.19px #555;">1</span>
<span class="t" style="left:2113.40px;top:479.36px;font-size:16px;color:#555;-webkit-text-stroke:0.19px #555;transform-origin:0 50%;transform:scaleX(1.0581);">Steve</span>
<span class="t" style="left:2414.30px;top:483.86px;font-size:16px;color:#9090a0;-webkit-text-stroke:0.19px #9090a0;transform-origin:0 50%;transform:scaleX(1.0727);">Shares:</span>
<span class="t" style="left:2483.50px;top:483.86px;font-size:16px;color:#3f66d8;-webkit-text-stroke:0.19px #3f66d8;transform-origin:0 50%;transform:scaleX(1.0783);">44</span>
<span class="t" style="left:2086.50px;top:526.36px;font-size:16px;color:#555;-webkit-text-stroke:0.19px #555;">2</span>
<span class="t" style="left:2116.20px;top:526.36px;font-size:16px;color:#555;letter-spacing:0.222px;-webkit-text-stroke:0.19px #555;transform-origin:0 50%;transform:scaleX(1.1000);">Mayank Tivary</span>
<span class="t" style="left:2415.80px;top:531.46px;font-size:16px;color:#9090a0;-webkit-text-stroke:0.19px #9090a0;transform-origin:0 50%;transform:scaleX(1.0727);">Shares:</span>
<span class="t" style="left:2484.80px;top:531.46px;font-size:16px;color:#3f66d8;-webkit-text-stroke:0.19px #3f66d8;transform-origin:0 50%;transform:scaleX(1.0057);">32</span>
<span class="t" style="left:2086.50px;top:574.36px;font-size:16px;color:#555;-webkit-text-stroke:0.19px #555;">3</span>
<span class="t" style="left:2117.30px;top:574.36px;font-size:16px;color:#555;letter-spacing:0.454px;-webkit-text-stroke:0.19px #555;transform-origin:0 50%;transform:scaleX(1.1000);">Social ripple admin</span>
<span class="t" style="left:2415.00px;top:579.46px;font-size:16px;color:#9090a0;-webkit-text-stroke:0.19px #9090a0;transform-origin:0 50%;transform:scaleX(1.0727);">Shares:</span>
<span class="t" style="left:2484.00px;top:579.46px;font-size:16px;color:#3f66d8;-webkit-text-stroke:0.19px #3f66d8;transform-origin:0 50%;transform:scaleX(1.0504);">26</span>
<span class="t" style="left:2086.50px;top:622.06px;font-size:16px;color:#555;-webkit-text-stroke:0.19px #555;">4</span>
<span class="t" style="left:2118.30px;top:622.06px;font-size:16px;color:#555;letter-spacing:0.009px;-webkit-text-stroke:0.19px #555;transform-origin:0 50%;transform:scaleX(1.1000);">John Leader</span>
<span class="t" style="left:2429.30px;top:626.76px;font-size:16px;color:#9090a0;-webkit-text-stroke:0.19px #9090a0;transform-origin:0 50%;transform:scaleX(1.0727);">Shares:</span>
<span class="t" style="left:2493.80px;top:626.76px;font-size:16px;color:#3f66d8;-webkit-text-stroke:0.19px #3f66d8;">1</span>
<span class="t" style="left:2086.40px;top:906.19px;font-size:19.5px;color:#1a1f36;letter-spacing:0.536px;-webkit-text-stroke:0.55px #1a1f36;transform-origin:0 50%;transform:scaleX(1.1000);">Impressions &amp; Click Through Rate</span>
<span class="t" style="left:2141.50px;top:954.57px;font-size:13.5px;color:#8e8c9a;letter-spacing:0.178px;-webkit-text-stroke:0.2px #8e8c9a;transform-origin:0 50%;transform:scaleX(1.1000);">Impressions:</span>
<span class="t" style="left:2142.60px;top:975.33px;font-size:14.5px;color:#3f66d8;-webkit-text-stroke:0.25px #3f66d8;">0</span>
<span class="t" style="left:2251.50px;top:954.57px;font-size:13.5px;color:#8e8c9a;-webkit-text-stroke:0.2px #8e8c9a;transform-origin:0 50%;transform:scaleX(1.0996);">Click Through Rate</span>
<span class="t" style="left:2251.50px;top:975.33px;font-size:14.5px;font-weight:700;color:#5aa22e;transform-origin:0 50%;transform:scaleX(1.0553);">0.00%</span>
<span class="t" style="left:2141.50px;top:1017.87px;font-size:13.5px;color:#8e8c9a;letter-spacing:0.178px;-webkit-text-stroke:0.2px #8e8c9a;transform-origin:0 50%;transform:scaleX(1.1000);">Impressions:</span>
<span class="t" style="left:2142.60px;top:1038.63px;font-size:14.5px;color:#3f66d8;-webkit-text-stroke:0.25px #3f66d8;">0</span>
<span class="t" style="left:2251.50px;top:1017.87px;font-size:13.5px;color:#8e8c9a;-webkit-text-stroke:0.2px #8e8c9a;transform-origin:0 50%;transform:scaleX(1.0996);">Click Through Rate</span>
<span class="t" style="left:2251.50px;top:1038.63px;font-size:14.5px;font-weight:700;color:#5aa22e;transform-origin:0 50%;transform:scaleX(1.0553);">0.00%</span>
<span class="t" style="left:2141.50px;top:1081.17px;font-size:13.5px;color:#8e8c9a;letter-spacing:0.178px;-webkit-text-stroke:0.2px #8e8c9a;transform-origin:0 50%;transform:scaleX(1.1000);">Impressions:</span>
<span class="t" style="left:2142.60px;top:1101.93px;font-size:14.5px;color:#3f66d8;-webkit-text-stroke:0.25px #3f66d8;transform-origin:0 50%;transform:scaleX(1.0941);">828</span>
<span class="t" style="left:2251.50px;top:1081.17px;font-size:13.5px;color:#8e8c9a;-webkit-text-stroke:0.2px #8e8c9a;transform-origin:0 50%;transform:scaleX(1.0996);">Click Through Rate</span>
<span class="t" style="left:2251.50px;top:1101.93px;font-size:14.5px;font-weight:700;color:#5aa22e;letter-spacing:-0.057px;">18.48%</span>
<span class="t" style="left:2141.50px;top:1144.47px;font-size:13.5px;color:#8e8c9a;letter-spacing:0.178px;-webkit-text-stroke:0.2px #8e8c9a;transform-origin:0 50%;transform:scaleX(1.1000);">Impressions:</span>
<span class="t" style="left:2142.60px;top:1165.23px;font-size:14.5px;color:#3f66d8;-webkit-text-stroke:0.25px #3f66d8;">0</span>
<span class="t" style="left:2251.50px;top:1144.47px;font-size:13.5px;color:#8e8c9a;-webkit-text-stroke:0.2px #8e8c9a;transform-origin:0 50%;transform:scaleX(1.0996);">Click Through Rate</span>
<span class="t" style="left:2251.50px;top:1165.23px;font-size:14.5px;font-weight:700;color:#5aa22e;transform-origin:0 50%;transform:scaleX(1.0553);">0.00%</span>
<span class="t" style="left:662.20px;top:906.76px;font-size:19.3px;color:#000;letter-spacing:0.924px;-webkit-text-stroke:0.55px #000;transform-origin:0 50%;transform:scaleX(1.1000);">Reach &amp; Amplification</span>
<span class="t" style="left:721.74px;top:987.90px;font-size:13px;color:#9a9cb0;letter-spacing:0.500px;-webkit-text-stroke:0.16px #9a9cb0;">205</span>
<span class="t" style="left:721.74px;top:1056.90px;font-size:13px;color:#9a9cb0;letter-spacing:0.500px;-webkit-text-stroke:0.16px #9a9cb0;">164</span>
<span class="t" style="left:721.74px;top:1125.80px;font-size:13px;color:#9a9cb0;letter-spacing:0.500px;-webkit-text-stroke:0.16px #9a9cb0;">123</span>
<span class="t" style="left:729.47px;top:1194.80px;font-size:13px;color:#9a9cb0;letter-spacing:0.500px;-webkit-text-stroke:0.16px #9a9cb0;">82</span>
<span class="t" style="left:729.47px;top:1263.80px;font-size:13px;color:#9a9cb0;letter-spacing:0.500px;-webkit-text-stroke:0.16px #9a9cb0;">41</span>
<span class="t" style="left:737.20px;top:1332.70px;font-size:13px;color:#9a9cb0;letter-spacing:0.500px;-webkit-text-stroke:0.16px #9a9cb0;">0</span>
<span class="t" style="left:742.17px;top:1347.80px;font-size:13px;color:#9a9cb0;letter-spacing:0.800px;-webkit-text-stroke:0.16px #9a9cb0;">Mar</span>
<span class="t" style="left:857.13px;top:1347.80px;font-size:13px;color:#9a9cb0;letter-spacing:0.800px;-webkit-text-stroke:0.16px #9a9cb0;">Apr</span>
<span class="t" style="left:967.93px;top:1347.80px;font-size:13px;color:#9a9cb0;letter-spacing:0.800px;-webkit-text-stroke:0.16px #9a9cb0;">May</span>
<span class="t" style="left:1083.98px;top:1347.80px;font-size:13px;color:#9a9cb0;letter-spacing:0.800px;-webkit-text-stroke:0.16px #9a9cb0;">Jun</span>
<span class="t" style="left:1199.36px;top:1347.80px;font-size:13px;color:#9a9cb0;letter-spacing:0.800px;-webkit-text-stroke:0.16px #9a9cb0;">Jul</span>
<span class="t" style="left:1309.65px;top:1347.80px;font-size:13px;color:#9a9cb0;letter-spacing:0.800px;-webkit-text-stroke:0.16px #9a9cb0;">Aug</span>
<span class="t" style="left:1423.03px;top:1347.80px;font-size:13px;color:#9a9cb0;letter-spacing:0.800px;-webkit-text-stroke:0.16px #9a9cb0;">Sep</span>
<span class="t" style="left:1537.55px;top:1347.80px;font-size:13px;color:#9a9cb0;letter-spacing:0.800px;-webkit-text-stroke:0.16px #9a9cb0;">Oct</span>
<span class="t" style="left:1648.93px;top:1347.80px;font-size:13px;color:#9a9cb0;letter-spacing:0.800px;-webkit-text-stroke:0.16px #9a9cb0;">Nov</span>
<span class="t" style="left:1762.31px;top:1347.80px;font-size:13px;color:#9a9cb0;letter-spacing:0.800px;-webkit-text-stroke:0.16px #9a9cb0;">Dec</span>
<span class="t" style="left:1877.64px;top:1347.80px;font-size:13px;color:#9a9cb0;letter-spacing:0.800px;-webkit-text-stroke:0.16px #9a9cb0;">Jan</span>
<span class="t" style="left:1989.79px;top:1347.80px;font-size:13px;color:#9a9cb0;letter-spacing:0.800px;-webkit-text-stroke:0.16px #9a9cb0;">Feb</span>
<div class="t" style="left:28.60px;top:26.45px;font-size:34.2px;font-weight:700;color:#4476f6;"><span style="display:inline-block;transform-origin:0 50%;transform:translateX(5.00px) scaleX(0.682);-webkit-text-stroke:1.0px #4476f6;">S</span><span style="display:inline-block;transform-origin:0 50%;transform:translateX(-0.67px) scaleX(0.963);">o</span><span style="display:inline-block;transform-origin:0 50%;transform:translateX(-0.40px) scaleX(1.017);">c</span><span style="display:inline-block;transform-origin:0 50%;transform:translateX(2.00px) scaleX(0.800);">i</span><span style="display:inline-block;transform-origin:0 50%;transform:translateX(1.02px) scaleX(0.979);">a</span><span style="display:inline-block;transform-origin:0 50%;transform:translateX(3.62px) scaleX(0.833);">l</span></div>
<div class="t" style="left:28.60px;top:55.26px;font-size:33.6px;font-weight:700;color:#27448f;"><span style="display:inline-block;transform-origin:0 50%;transform:translateX(3.68px) scaleX(0.659);-webkit-text-stroke:1.0px #27448f;">R</span><span style="display:inline-block;transform-origin:0 50%;transform:translateX(-3.07px) scaleX(0.960);">i</span><span style="display:inline-block;transform-origin:0 50%;transform:translateX(-4.34px) scaleX(1.033);">p</span><span style="display:inline-block;transform-origin:0 50%;transform:translateX(-2.54px) scaleX(1.028);">p</span><span style="display:inline-block;transform-origin:0 50%;transform:translateX(-0.80px) scaleX(0.900);">l</span><span style="display:inline-block;transform-origin:0 50%;transform:translateX(-1.52px) scaleX(1.094);">e</span></div>
<span class="t" style="left:580.00px;top:628.18px;font-size:16px;color:#c8c8cc;letter-spacing:0.846px;-webkit-text-stroke:0.19px #c8c8cc;transform-origin:116.00px 7.82px;transform:rotate(-90deg);">Number Of Active Employees</span>
<span class="t" style="left:565.05px;top:1146.00px;font-size:13.3px;color:#a0a0a8;letter-spacing:0.700px;-webkit-text-stroke:0.16px #a0a0a8;transform-origin:117.75px 6.50px;transform:rotate(-90deg);">Total Reach (Impressions &amp; Shares)</span>
<svg class="b" style="left:0;top:0" width="140" height="100" viewBox="0 0 140 100">
<defs><clipPath id="lo"><circle cx="60.85" cy="45.45" r="9.3"/></clipPath></defs>
<circle cx="60.85" cy="45.45" r="9.3" fill="#4476f6"/>
<circle cx="63.6" cy="49" r="6.2" fill="#27448f" clip-path="url(#lo)"/>
<path d="M57 51 Q54.4 44.300 63.600 42.600" fill="none" stroke="#fff" stroke-width="2.100" stroke-linecap="round"/>
<path d="M62.900 39.500 L67.400 42 L64.300 45.600 Z" fill="#fff" stroke="#fff" stroke-width="0.5" stroke-linejoin="round"/>
</svg>
</body></html>
